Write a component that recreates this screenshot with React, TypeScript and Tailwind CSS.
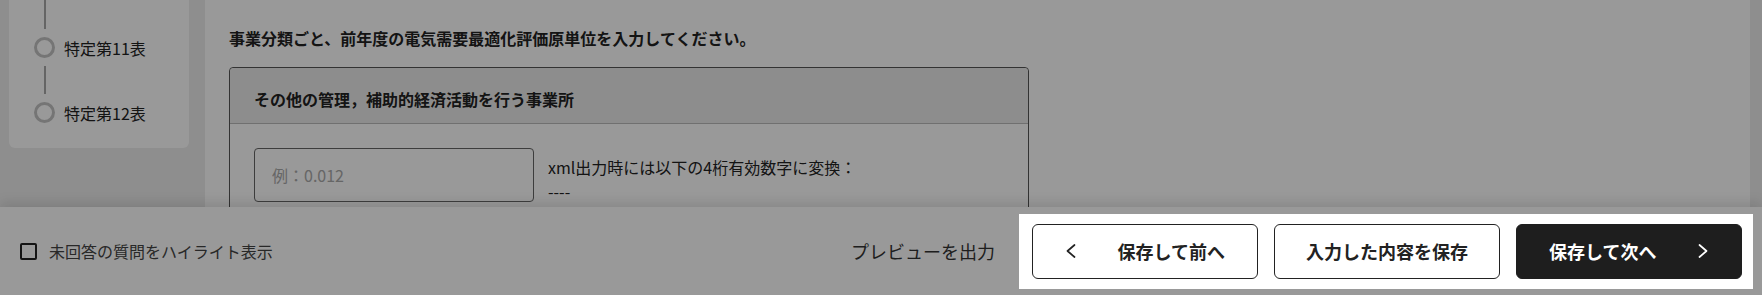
import React from "react";

const steps = ["特定第11表", "特定第12表"];

const Chevron = ({ dir }: { dir: "left" | "right" }) => (
  <svg width="12" height="14" viewBox="0 0 12 14" fill="none" stroke="currentColor" strokeWidth="1.7" strokeLinecap="round" strokeLinejoin="round">
    <polyline points={dir === "left" ? "9.5,1 2.5,7 9.5,13" : "2.5,1 9.5,7 2.5,13"} />
  </svg>
);

const StepList = () => {
  return (
    <div className="w-[180px] bg-white rounded-b-md pl-[25px] pb-[25px]">
      {/* connector coming from the step scrolled above */}
      <div className="ml-[9.5px] mb-2 h-[29px] w-0.5 bg-[#a8a8a8]" />
      {steps.map((label, index) => (
        <div key={label}>
          {index > 0 && <div className="ml-[9.5px] my-2 h-7 w-0.5 bg-[#a8a8a8]" />}
          <div className="flex items-center gap-[9px] h-[21px]">
            <span className="w-[21px] h-[21px] shrink-0 rounded-full border-[3px] border-[#c4c4c4] bg-white" />
            <span className="text-base text-[#222] whitespace-nowrap">{label}</span>
          </div>
        </div>
      ))}
    </div>
  );
};

const UnitCard = () => {
  return (
    <div className="w-[800px] rounded-[4px] border border-[#555] bg-white">
      <div className="h-[56px] px-6 pt-[19px] bg-[#ececec] border-b border-[#bbbbbb] rounded-t-[4px]">
        <h3 className="text-base leading-6 font-bold text-[#222]">その他の管理，補助的経済活動を行う事業所</h3>
      </div>
      <div className="p-6 flex items-start">
        <input
          type="text"
          placeholder="例：0.012"
          className="w-[280px] h-[54px] shrink-0 rounded-[4px] border border-[#666] px-[17px] text-base text-[#222] placeholder:text-[#aaaaaa] outline-none"
        />
        <div className="ml-[14px] mt-[7px] text-base leading-6 text-[#222]">
          <p>xml出力時には以下の4桁有効数字に変換：</p>
          <p>----</p>
        </div>
      </div>
    </div>
  );
};

export default function App() {
  return (
    <div className="h-[295px] w-full overflow-hidden flex flex-col bg-white font-['Noto_Sans_CJK_JP',sans-serif] text-[#222]">
      <div className="flex flex-1 min-h-0">
        <aside className="w-[205px] shrink-0 bg-[#ededed] pl-[9px]">
          <StepList />
        </aside>
        <main className="flex-1 min-w-0 px-6 pt-[26px]">
          <p className="text-base leading-6 font-bold mb-[17px]">事業分類ごと、前年度の電気需要最適化評価原単位を入力してください。</p>
          <UnitCard />
        </main>
        <div className="w-3 shrink-0 bg-[#ededed]" />
      </div>

      <footer className="relative h-[88px] shrink-0 bg-white flex items-center justify-between pl-5 pr-[9px] shadow-[0_-4px_12px_rgba(0,0,0,0.12)]">
        <label className="flex items-center">
          <span className="w-[17px] h-[17px] rounded-[2px] border-2 border-[#222] bg-white" />
          <span className="ml-3 text-base text-[#444]">未回答の質問をハイライト表示</span>
        </label>
        <div className="flex items-center">
          <button className="px-6 text-[18px] text-[#333]">プレビューを出力</button>
          <div className="relative z-10 flex gap-4 bg-white pl-[13px] pr-[11px] py-[10px] shadow-[0_0_0_9999px_rgba(0,0,0,0.4)]">
            <button className="w-[226px] h-[55px] flex items-center justify-between px-8 rounded-md border border-[#222] bg-white text-[18px] font-bold text-[#222]">
              <Chevron dir="left" />
              <span>保存して前へ</span>
            </button>
            <button className="w-[226px] h-[55px] flex items-center justify-center rounded-md border border-[#222] bg-white text-[18px] font-bold text-[#222]">
              入力した内容を保存
            </button>
            <button className="w-[226px] h-[55px] flex items-center justify-between px-8 rounded-md border border-[#1e1e1e] bg-[#1e1e1e] text-[18px] font-bold text-white">
              <span>保存して次へ</span>
              <Chevron dir="right" />
            </button>
          </div>
        </div>
      </footer>
    </div>
  );
}
